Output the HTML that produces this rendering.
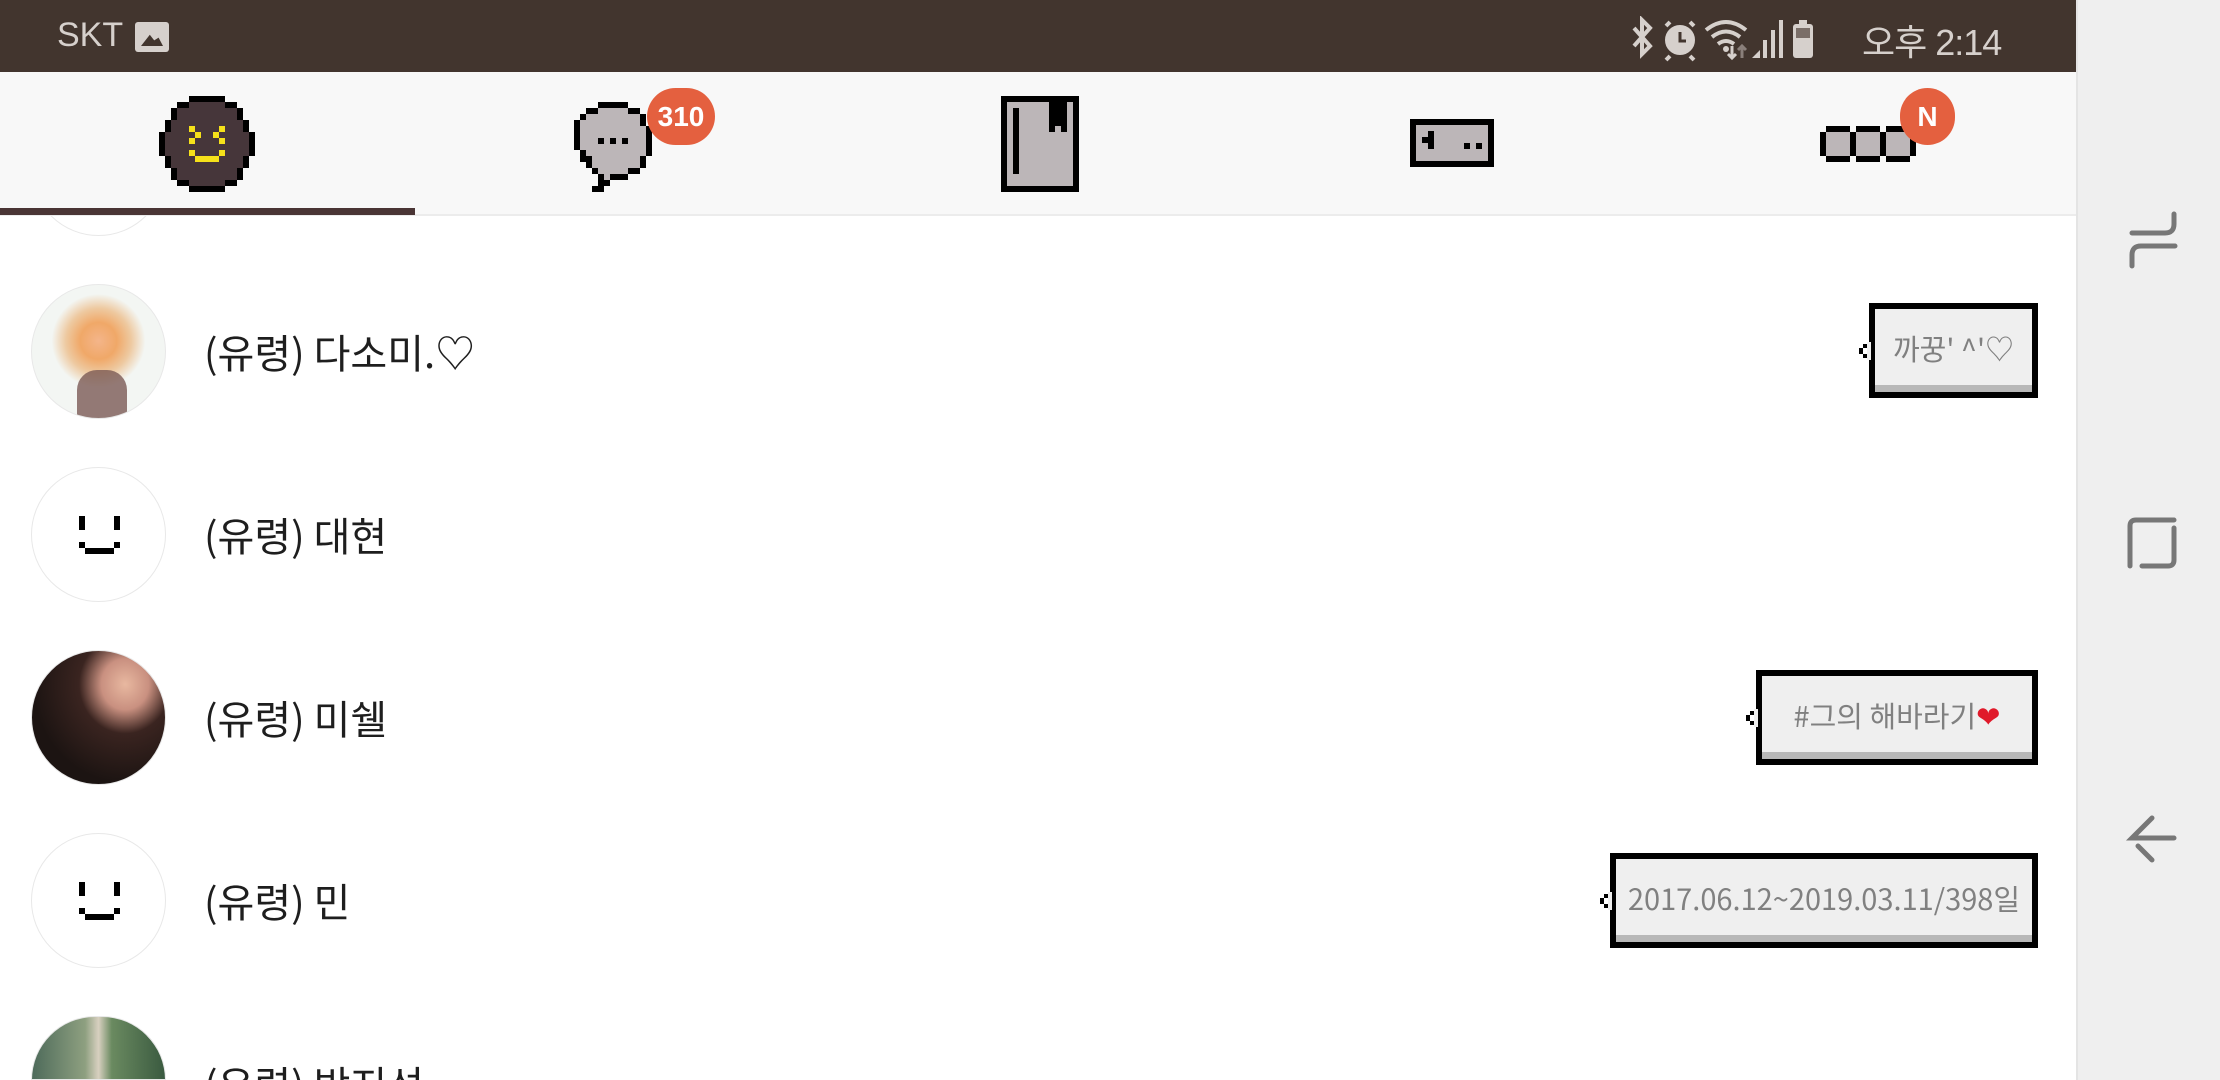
<!DOCTYPE html>
<html><head><meta charset="utf-8"><style>
*{margin:0;padding:0;box-sizing:border-box}
html,body{width:2220px;height:1080px;overflow:hidden}
body{background:#fff;font-family:"Liberation Sans","Noto Sans CJK KR",sans-serif}
#w{position:relative;width:2220px;height:1080px;overflow:hidden}
.status{position:absolute;left:0;top:0;width:2076px;height:72px;background:#42352e;color:#d6d0cc}
.tabs{position:absolute;left:0;top:72px;width:2076px;height:144px;background:#f8f8f8;border-bottom:2px solid #ececec}
.nav{position:absolute;left:2076px;top:0;width:144px;height:1080px;background:#efefef;border-left:2px solid #e4e4e4}
.av{position:absolute;left:31px;width:135px;height:135px;border-radius:50%;overflow:hidden;border:1px solid #e8e8e8}
.name{position:absolute;left:204px;font-size:40px;color:#1e1e1e;line-height:50px;font-family:"Noto Sans CJK KR",sans-serif;white-space:nowrap}
.bub{position:absolute;background:#efefef;border:6px solid #000;box-shadow:inset 0 -7px 0 #b8b8b8;color:#808080;font-size:29px;display:flex;align-items:center;justify-content:center;padding-bottom:5px;font-family:"Noto Sans CJK KR",sans-serif}
.bub svg{position:absolute;left:-18px;top:27px}
.badge{position:absolute;background:#e4603f;color:#fff;font-weight:bold;font-size:28px;display:flex;align-items:center;justify-content:center;border-radius:30px}
</style></head><body><div id="w">
<div class="status">
 <div style="position:absolute;left:57px;top:16px;font-size:34px;">SKT</div>
 <div style="position:absolute;left:135px;top:22px;width:34px;height:30px;background:#d6d0cc;border-radius:3px"><div style="position:absolute;left:6px;top:10px;width:22px;height:14px;background:#42352e;clip-path:polygon(0 100%,40% 20%,60% 60%,80% 40%,100% 100%)"></div></div>
 <svg style="position:absolute;left:1630px;top:16px" width="380" height="46" viewBox="0 0 380 46">
  <g fill="none" stroke="#d6d0cc" stroke-width="4">
   <path d="M4 12 L20 30 L12 38 L12 4 L20 12 L4 30"/>
   <circle cx="50" cy="24" r="13" fill="#d6d0cc"/>
   <path d="M40 6 L36 10 M60 6 L64 10 M40 40 L36 44 M60 40 L64 44"/>
   <path d="M50 16 V25 H56" stroke="#42352e" stroke-width="3"/>
   <path d="M76 14 Q96 -2 116 14 M82 21 Q96 10 110 21 M88 28 Q96 22 104 28"/>
  </g>
  <circle cx="96" cy="33" r="3" fill="#d6d0cc"/>
  <path d="M102 30 V42 M98 38 L102 42 L106 38" stroke="#d6d0cc" stroke-width="3" fill="none"/>
  <path d="M112 42 V30 M108 34 L112 30 L116 34" stroke="#8a7f7a" stroke-width="3" fill="none"/>
  <path d="M122 42 L130 34 V42Z" fill="#d6d0cc"/>
  <rect x="133" y="24" width="4" height="18" fill="#d6d0cc"/><rect x="141" y="14" width="4" height="28" fill="#d6d0cc"/><rect x="149" y="4" width="4" height="38" fill="#d6d0cc"/>
  <rect x="163" y="8" width="20" height="34" rx="3" fill="#d6d0cc"/><rect x="169" y="4" width="8" height="5" fill="#d6d0cc"/><rect x="166" y="12" width="14" height="10" fill="#7a6e68"/>
 </svg>
 <div style="position:absolute;left:1862px;top:14px;font-size:36px;letter-spacing:-1px;font-family:'Liberation Sans','Noto Sans CJK KR',sans-serif">오후 2:14</div>
</div>
<div class="tabs">
 <svg style="position:absolute;left:159px;top:24px" width="96" height="96" viewBox="0 0 16 16" shape-rendering="crispEdges">
  <path d="M5 0h6v1h2v1h1v2h1v2h1v4h-1v2h-1v2h-1v1h-2v1H5v-1H3v-1H2v-2H1v-2H0V6h1V4h1V2h1V1h2z" fill="#000"/>
  <path d="M5 1h6v1h2v2h1v2h1v4h-1v2h-1v2h-2v1H5v-1H3v-2H2v-2H1V6h1V4h1V2h2z" fill="#46363a"/>
  <g fill="#f5e11a"><rect x="5" y="5" width="1" height="1"/><rect x="6" y="6" width="1" height="1"/><rect x="5" y="7" width="1" height="1"/><rect x="10" y="5" width="1" height="1"/><rect x="9" y="6" width="1" height="1"/><rect x="10" y="7" width="1" height="1"/><rect x="5" y="9" width="1" height="1"/><rect x="10" y="9" width="1" height="1"/><rect x="6" y="10" width="4" height="1"/></g>
 </svg>
 <svg style="position:absolute;left:574px;top:30px" width="96" height="90" viewBox="0 0 16 15" shape-rendering="crispEdges">
  <path d="M4 0h5v1h2v1h1v2h1v5h-1v2h-1v1H9v1H6v1H5v1H3v-1H4v-2H3v-1H2v-1H1V8H0V3h1V2h1V1h2z" fill="#000"/>
  <path d="M4 1h5v1h2v2h1v5h-1v2H9v1H6v1H5v-1H4v-1H3V9H2V8H1V3h1V2h2z" fill="#bcb6b8"/>
  <rect x="4" y="6" width="1" height="1"/><rect x="6" y="6" width="1" height="1"/><rect x="8" y="6" width="1" height="1"/>
 </svg>
 <div class="badge" style="left:647px;top:16px;width:68px;height:57px">310</div>
 <svg style="position:absolute;left:1001px;top:24px" width="78" height="96" viewBox="0 0 13 16" shape-rendering="crispEdges">
  <rect x="0" y="0" width="13" height="16" fill="#000"/><rect x="1" y="1" width="11" height="14" fill="#bcb6b8"/>
  <rect x="2" y="2" width="1" height="11" fill="#000"/><rect x="8" y="1" width="3" height="5" fill="#000"/><rect x="9" y="5" width="1" height="1" fill="#bcb6b8"/>
 </svg>
 <svg style="position:absolute;left:1410px;top:47px" width="84" height="48" viewBox="0 0 14 8" shape-rendering="crispEdges">
  <rect x="0" y="0" width="14" height="8" fill="#000"/><rect x="1" y="1" width="12" height="6" fill="#bcb6b8"/>
  <rect x="2" y="3" width="2" height="1" fill="#000"/><rect x="3" y="2" width="1" height="3" fill="#000"/>
  <rect x="9" y="4" width="1" height="1" fill="#000"/><rect x="11" y="4" width="1" height="1" fill="#000"/>
 </svg>
 <svg style="position:absolute;left:1820px;top:54px" width="96" height="36" viewBox="0 0 16 6" shape-rendering="crispEdges">
  <g fill="#000"><rect x="1" y="0" width="4" height="6"/><rect x="0" y="1" width="6" height="4"/><rect x="6" y="0" width="4" height="6"/><rect x="5" y="1" width="6" height="4"/><rect x="11" y="0" width="4" height="6"/><rect x="10" y="1" width="6" height="4"/></g>
  <g fill="#bcb6b8"><rect x="1" y="1" width="4" height="4"/><rect x="6" y="1" width="4" height="4"/><rect x="11" y="1" width="4" height="4"/></g>
 </svg>
 <div class="badge" style="left:1900px;top:16px;width:55px;height:57px">N</div>
 <div style="position:absolute;left:0;top:136px;width:415px;height:7px;background:#4a3535"></div>
</div>
<div style="position:absolute;left:31px;top:216px;width:135px;height:20px;overflow:hidden"><div style="width:135px;height:135px;border-radius:50%;border:1px solid #e8e8e8;margin-top:-115px"></div></div>

<div class="av" style="top:284px;background:radial-gradient(circle at 50% 42%,#f4b58a 0,#f0a868 18%,#eec9a0 32%,#f3f6f3 46%);"><div style="position:absolute;left:45px;top:85px;width:50px;height:55px;background:#7a5a55;border-radius:20px 20px 0 0;opacity:.8"></div></div>
<div class="name" style="top:326px">(유령) 다소미.♡</div>
<div class="bub" style="left:1869px;top:303px;width:169px;height:95px"><svg width="14" height="30" viewBox="0 0 7 15" shape-rendering="crispEdges"><rect x="5" y="3" width="2" height="9" fill="#efefef"/><rect x="3" y="4" width="2" height="2" fill="#000"/><rect x="1" y="6" width="2" height="3" fill="#000"/><rect x="3" y="9" width="2" height="2" fill="#000"/></svg>까꿍' ^'♡</div>

<div class="av" style="top:467px;background:#fff"><svg width="135" height="135" viewBox="0 0 135 135" shape-rendering="crispEdges"><g fill="#000"><rect x="47" y="48" width="6" height="14"/><rect x="82" y="48" width="6" height="14"/><rect x="47" y="74" width="6" height="6"/><rect x="82" y="74" width="6" height="6"/><rect x="53" y="80" width="29" height="6"/></g></svg></div>
<div class="name" style="top:509px">(유령) 대현</div>

<div class="av" style="top:650px;background:radial-gradient(ellipse at 70% 25%,#e8b8a0 0,#c99080 18%,#3a2420 35%,#1c1412 70%);"></div>
<div class="name" style="top:692px">(유령) 미쉘</div>
<div class="bub" style="left:1756px;top:670px;width:282px;height:95px"><svg width="14" height="30" viewBox="0 0 7 15" shape-rendering="crispEdges"><rect x="5" y="3" width="2" height="9" fill="#efefef"/><rect x="3" y="4" width="2" height="2" fill="#000"/><rect x="1" y="6" width="2" height="3" fill="#000"/><rect x="3" y="9" width="2" height="2" fill="#000"/></svg>#그의 해바라기<span style="color:#e0192a">❤</span></div>

<div class="av" style="top:833px;background:#fff"><svg width="135" height="135" viewBox="0 0 135 135" shape-rendering="crispEdges"><g fill="#000"><rect x="47" y="48" width="6" height="14"/><rect x="82" y="48" width="6" height="14"/><rect x="47" y="74" width="6" height="6"/><rect x="82" y="74" width="6" height="6"/><rect x="53" y="80" width="29" height="6"/></g></svg></div>
<div class="name" style="top:875px">(유령) 민</div>
<div class="bub" style="left:1610px;top:853px;width:428px;height:95px"><svg width="14" height="30" viewBox="0 0 7 15" shape-rendering="crispEdges"><rect x="5" y="3" width="2" height="9" fill="#efefef"/><rect x="3" y="4" width="2" height="2" fill="#000"/><rect x="1" y="6" width="2" height="3" fill="#000"/><rect x="3" y="9" width="2" height="2" fill="#000"/></svg>2017.06.12~2019.03.11/398일</div>

<div class="av" style="top:1016px;height:64px;border-radius:68px 68px 0 0;background:linear-gradient(90deg,#4d6a5a,#8ea080 40%,#d8d0c0 50%,#6a8a60 60%,#3a5a40)"></div>
<div style="position:absolute;left:204px;top:1058px;height:22px;overflow:hidden"><div class="name" style="position:static">(유령) 박지성</div></div>

<div class="nav">
 <svg style="position:absolute;left:0;top:0" width="144" height="1080" fill="none" stroke="#777" stroke-width="5" stroke-linecap="round">
  <path d="M96 214 V224 Q96 233 87 233 H54"/>
  <path d="M97 246 H63 Q54 246 54 255 V266"/>
  <path d="M52 566 V526 Q52 520 58 520 H96 M96 528 V560 Q96 566 90 566 H64"/>
  <path d="M74 818 L54 838 H96 M60 846 L74 860"/>
 </svg>
</div>
</div></body></html>
